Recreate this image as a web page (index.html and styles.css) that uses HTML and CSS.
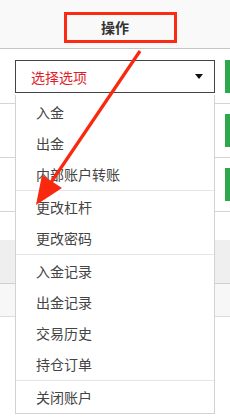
FILE: index.html
```html
<html lang="zh">
<head>
  <meta charset="utf-8">
  <title>操作</title>
  <link rel="stylesheet" href="styles.css">
</head>
<body>
<div class="page">
  <div class="thead"><span class="th-mark">操作</span></div>

  <div class="row first">
    <div class="select"><span class="select-text">选择选项</span><span class="caret"></span></div>
    <div class="btn"></div>
  </div>
  <div class="row">
    <div class="cell"></div>
    <div class="btn"></div>
  </div>
  <div class="row">
    <div class="cell"></div>
    <div class="btn"></div>
  </div>
  <div class="row-short"></div>
  <div class="band"></div>
  <div class="band light"></div>

  <ul class="menu">
    <li>入金</li>
    <li>出金</li>
    <li>内部账户转账</li>
    <li class="sep"></li>
    <li>更改杠杆</li>
    <li>更改密码</li>
    <li class="sep"></li>
    <li>入金记录</li>
    <li>出金记录</li>
    <li>交易历史</li>
    <li>持仓订单</li>
    <li class="sep"></li>
    <li>关闭账户</li>
  </ul>

  <svg class="arrow" width="230" height="419" viewBox="0 0 230 419">
    <line x1="140" y1="51" x2="50" y2="184" stroke="#f8290f" stroke-width="3.2"/>
    <polygon points="36,205 62,188 42,175" fill="#f8290f"/>
  </svg>
</div>
</body>
</html>
```

FILE: styles.css
```css
body { margin: 0; font-family: "Noto Sans CJK SC", "Microsoft YaHei", sans-serif; font-size: 14px; color: #333; background: #fff; }

.page { position: relative; width: 230px; height: 419px; overflow: hidden; }

.thead {
  height: 49px;
  padding-top: 12px;
  box-sizing: border-box;
  background-color: #f9f9f9;
  border-bottom: 1px solid #c4c4c4;
}

.th-mark {
  display: block;
  box-sizing: border-box;
  width: 113px;
  height: 31px;
  margin-left: 64px;
  padding-left: 34px;
  line-height: 25px;
  font-weight: bold;
  color: #333;
  border: 3px solid #fb2a12;
}

.row {
  display: flex;
  gap: 10px;
  height: 54px;
  padding: 10px 0 0 15px;
  box-sizing: border-box;
  border-bottom: 1px solid #d4d4d4;
}
.row.first { height: 55px; padding-top: 11px; }

.cell { flex: none; width: 200px; height: 33px; }

.btn {
  flex: none;
  width: 60px;
  height: 33px;
  background-color: #2fa84c;
}

.select {
  flex: none;
  display: flex;
  align-items: center;
  box-sizing: border-box;
  width: 200px;
  height: 33px;
  padding: 0 11px 0 15px;
  border: 1px solid #444;
  background: #fff;
}
.select-text { flex: 1; color: #de1f2a; }
.caret {
  width: 0;
  height: 0;
  border-left: 4.5px solid transparent;
  border-right: 4.5px solid transparent;
  border-top: 5px solid #111;
}

.row-short { height: 28px; }
.band { height: 43px; background-color: #efefef; border-bottom: 1px solid #cfcfcf; }
.band.light { height: 32px; background-color: #f7f7f7; border-bottom: 1px solid #dcdcdc; }

.menu {
  position: absolute;
  left: 15px;
  top: 95px;
  width: 200px;
  box-sizing: border-box;
  margin: 0;
  padding: 2px 0 0;
  list-style: none;
  background: #fff;
  border: 1px solid #d2d2d2;
  border-top: 0;
}
.menu li { height: 31px; line-height: 31px; padding-left: 20px; color: #444; }
.menu li.sep { height: 1px; padding: 0; margin-bottom: 1px; background-color: #e6e6e6; }

.arrow { position: absolute; left: 0; top: 0; pointer-events: none; }
```
